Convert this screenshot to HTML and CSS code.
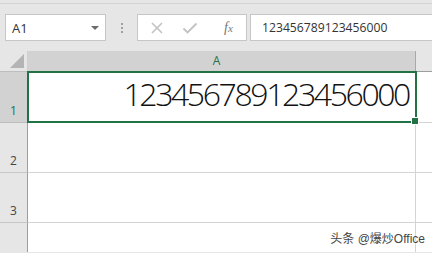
FILE: index.html
```html
<!DOCTYPE html>
<html lang="en">
<head>
    <meta charset="UTF-8">
    <title>Sheet</title>
    <link rel="stylesheet" href="styles.css">
</head>
<body>
    <div class="toolbar">
        <div class="name-box">
            <span>A1</span>
            <span class="caret"></span>
        </div>
        <div class="grip"><i></i><i></i><i></i></div>
        <div class="fx-buttons">
            <svg class="btn" width="14" height="14" viewBox="0 0 14 14">
                <path d="M2 2 L12 12 M12 2 L2 12" stroke="#c2c2c2" stroke-width="1.6" fill="none"/>
            </svg>
            <svg class="btn" width="16" height="14" viewBox="0 0 16 14">
                <path d="M1.5 7.5 L5.5 11.5 L14.5 2.5" stroke="#c2c2c2" stroke-width="1.8" fill="none"/>
            </svg>
            <span class="fx">f<small>x</small></span>
        </div>
        <div class="formula">123456789123456000</div>
    </div>

    <div class="sheet">
        <div class="corner"><span class="tri"></span></div>
        <div class="col-head active">A</div>
        <div class="col-head rest"></div>

        <div class="row-head active">1</div>
        <div class="cell a1">
            123456789123456000
            <div class="selection"><span class="handle"></span></div>
        </div>
        <div class="cell rest"></div>

        <div class="row-head">2</div>
        <div class="cell"></div>
        <div class="cell rest"></div>

        <div class="row-head">3</div>
        <div class="cell"></div>
        <div class="cell rest"></div>

        <div class="row-head last"></div>
        <div class="cell last"></div>
        <div class="cell rest last"></div>
    </div>

    <div class="watermark">头条 @爆炒Office</div>
</body>
</html>
```

FILE: styles.css
```css
body {
    margin: 0;
    width: 432px;
    height: 253px;
    overflow: hidden;
    background: #e6e6e6;
    font-family: 'Open Sans', 'Noto Sans CJK SC', sans-serif;
    position: relative;
}

.toolbar {
    height: 48px;
    border-top: 1px solid #d4d4d4;
    margin-top: 3px;
    display: flex;
    align-items: flex-start;
    padding: 10px 0 0 5px;
    box-sizing: border-box;
}

.name-box {
    width: 101px;
    height: 27px;
    box-sizing: border-box;
    border: 1px solid #c6c6c6;
    background: #fff;
    display: flex;
    align-items: center;
    justify-content: space-between;
    padding: 0 6px 0 6px;
    font-size: 13px;
    color: #333;
}

.caret {
    width: 0;
    height: 0;
    border-left: 4px solid transparent;
    border-right: 4px solid transparent;
    border-top: 4px solid #6b6b6b;
}

.grip {
    width: 31px;
    height: 27px;
    display: flex;
    flex-direction: column;
    align-items: center;
    justify-content: center;
    gap: 2px;
}

.grip i {
    width: 2px;
    height: 2px;
    background: #a0a0a0;
}

.fx-buttons {
    width: 110px;
    height: 27px;
    box-sizing: border-box;
    border: 1px solid #c6c6c6;
    background: #fff;
    display: flex;
    align-items: center;
    padding-left: 12px;
    gap: 18px;
}

.fx {
    font-family: 'Liberation Serif', serif;
    font-style: italic;
    font-size: 14px;
    color: #777;
    margin-left: 8px;
}

.fx small {
    font-size: 11px;
}

.formula {
    margin-left: 3px;
    flex: 1;
    height: 27px;
    box-sizing: border-box;
    border: 1px solid #c6c6c6;
    border-right: none;
    background: #fff;
    padding-left: 11px;
    font-size: 12.2px;
    line-height: 25px;
    color: #333;
}

.sheet {
    display: grid;
    grid-template-columns: 28px 388px 1fr;
    grid-template-rows: 21px 51px 50px 50px 1fr;
    height: 201px;
    background: #fff;
}

.corner {
    background: #e6e6e6;
    border-right: 1px solid #d0d0d0;
    border-bottom: 1px solid #bdbdbd;
    position: relative;
}

.tri {
    position: absolute;
    right: 3px;
    bottom: 3px;
    width: 0;
    height: 0;
    border-left: 14px solid transparent;
    border-bottom: 14px solid #b4b4b4;
}

.col-head {
    background: #e6e6e6;
    border-bottom: 1px solid #aaa;
    font-size: 12px;
    color: #444;
    text-align: center;
    line-height: 20px;
    box-sizing: border-box;
}

.col-head.active {
    background: #d2d2d2;
    color: #217346;
    border-right: 1px solid #a8a8a8;
    padding-right: 10px;
}

.col-head.rest {
    border-bottom-color: #9e9e9e;
}

.row-head {
    background: #e6e6e6;
    border-right: 1px solid #9e9e9e;
    border-bottom: 1px solid #c6c6c6;
    font-size: 12px;
    color: #444;
    display: flex;
    align-items: flex-end;
    justify-content: center;
    padding-bottom: 3px;
    box-sizing: border-box;
}

.row-head.active {
    background: #d2d2d2;
    color: #217346;
    border-bottom-color: #bdbdbd;
}

.row-head.last,
.cell.last {
    border-bottom: none;
}

.cell {
    border-bottom: 1px solid #d4d4d4;
    border-right: 1px solid #d4d4d4;
    box-sizing: border-box;
}

.cell.rest {
    border-right: none;
}

.a1 {
    position: relative;
    font-family: 'Open Sans', sans-serif;
    font-weight: 300;
    font-size: 32px;
    letter-spacing: -2.4px;
    color: #111;
    text-align: right;
    padding-right: 6px;
    line-height: 1;
    display: flex;
    align-items: flex-end;
    justify-content: flex-end;
    padding-bottom: 12px;
}

.selection {
    position: absolute;
    left: -1px;
    top: -1px;
    right: -2px;
    bottom: -1px;
    border: 2px solid #217346;
}

.handle {
    position: absolute;
    right: -4px;
    bottom: -4px;
    width: 6px;
    height: 6px;
    background: #217346;
    border: 1px solid #fff;
}

.watermark {
    position: absolute;
    right: 7px;
    bottom: 7px;
    font-family: 'Liberation Sans', 'Noto Sans CJK SC', sans-serif;
    font-size: 12px;
    color: #444;
    text-shadow: 0 0 2px #fff;
}
```
